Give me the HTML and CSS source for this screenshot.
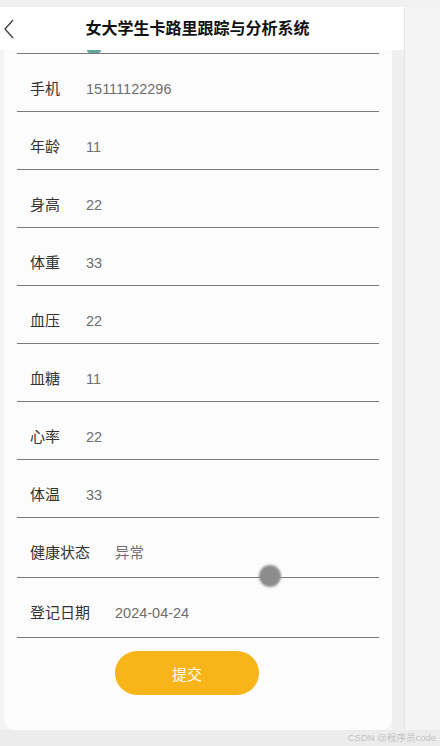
FILE: index.html
```html
<!DOCTYPE html>
<html lang="zh">
<head>
<meta charset="utf-8">
<title>女大学生卡路里跟踪与分析系统</title>
<link rel="stylesheet" href="styles.css">
</head>
<body>
<div class="page">
  <div class="top-gap"></div>
  <header class="header">
    <span class="back">
      <svg width="12" height="20" viewBox="0 0 12 20"><polyline points="10,1 2,10 10,19" fill="none" stroke="#444" stroke-width="1.4"/></svg>
    </span>
    <h1 class="title">女大学生卡路里跟踪与分析系统</h1>
  </header>
  <div class="main">
    <div class="card">
      <div class="form">
        <div class="cut"><span class="cut-avatar"></span></div>
        <div class="row"><span class="label">手机</span><span class="value">15111122296</span></div>
        <div class="row"><span class="label">年龄</span><span class="value">11</span></div>
        <div class="row"><span class="label">身高</span><span class="value">22</span></div>
        <div class="row"><span class="label">体重</span><span class="value">33</span></div>
        <div class="row"><span class="label">血压</span><span class="value">22</span></div>
        <div class="row"><span class="label">血糖</span><span class="value">11</span></div>
        <div class="row"><span class="label">心率</span><span class="value">22</span></div>
        <div class="row"><span class="label">体温</span><span class="value">33</span></div>
        <div class="row row-tall"><span class="label label-wide">健康状态</span><span class="value">异常</span></div>
        <div class="row row-tall"><span class="label label-wide">登记日期</span><span class="value">2024-04-24</span></div>
        <button class="submit">提交</button>
      </div>
    </div>
    <div class="strip"></div>
  </div>
  <div class="footer">CSDN @程序员code</div>
  <div class="touch"></div>
</div>
</body>
</html>
```
FILE: styles.css
```css
html, body {
  margin: 0;
  padding: 0;
}
body {
  background: #f4f4f4;
  font-family: "Liberation Sans", "Noto Sans CJK SC", sans-serif;
}
.page {
  position: relative;
  width: 440px;
  height: 746px;
  overflow: hidden;
}
.top-gap {
  height: 7px;
  background: #f1f1f1;
}
.header {
  box-sizing: border-box;
  width: 405px;
  height: 43px;
  background: #ffffff;
  border-right: 1px solid #e6e6e6;
  display: flex;
  align-items: center;
  position: relative;
}
.back {
  display: flex;
  margin-left: 3px;
  width: 12px;
}
.title {
  margin: 0 0 3px 0;
  flex: 1;
  text-align: center;
  padding-right: 24px;
  font-family: "Noto Sans CJK SC", sans-serif;
  font-size: 16px;
  line-height: 22px;
  font-weight: bold;
  color: #111;
}
.main {
  display: flex;
  height: 680px;
}
.card {
  width: 388px;
  margin-left: 4px;
  background: #fcfcfc;
  border-radius: 0 0 10px 10px;
}
.strip {
  box-sizing: border-box;
  width: 13px;
  background: #efefef;
  border-right: 1px solid #e4e4e4;
}
.form {
  margin-left: 13px;
  width: 362px;
  display: flex;
  flex-direction: column;
}
.cut {
  height: 3px;
  border-bottom: 1px solid #7a7a7a;
  position: relative;
}
.cut-avatar {
  display: block;
  margin-left: 70px;
  width: 14px;
  height: 3px;
  background: #5fa59a;
  border-radius: 0 0 7px 7px;
}
.row {
  display: flex;
  align-items: center;
  height: 20px;
  padding: 25px 0 12px 13px;
  border-bottom: 1px solid #7a7a7a;
  font-size: 15px;
  line-height: 20px;
}
.row-tall {
  padding-bottom: 14px;
}
.label {
  width: 56px;
  color: #333;
}
.label-wide {
  width: 85px;
}
.value {
  color: #6e6e6e;
  font-size: 14.5px;
}
.submit {
  margin: 13px 0 0 98px;
  width: 144px;
  height: 44px;
  border: none;
  border-radius: 22px;
  background: #f7b519;
  color: #fff;
  font-family: "Liberation Sans", "Noto Sans CJK SC", sans-serif;
  font-size: 15px;
  padding: 0;
}
.footer {
  height: 16px;
  line-height: 16px;
  text-align: right;
  padding-right: 4px;
  font-size: 9.5px;
  color: #c4c4c4;
  background: #ececec;
}
.touch {
  position: absolute;
  left: 259px;
  top: 565px;
  width: 22px;
  height: 22px;
  border-radius: 50%;
  background: #8c8c8c;
  filter: blur(1px);
}
```
